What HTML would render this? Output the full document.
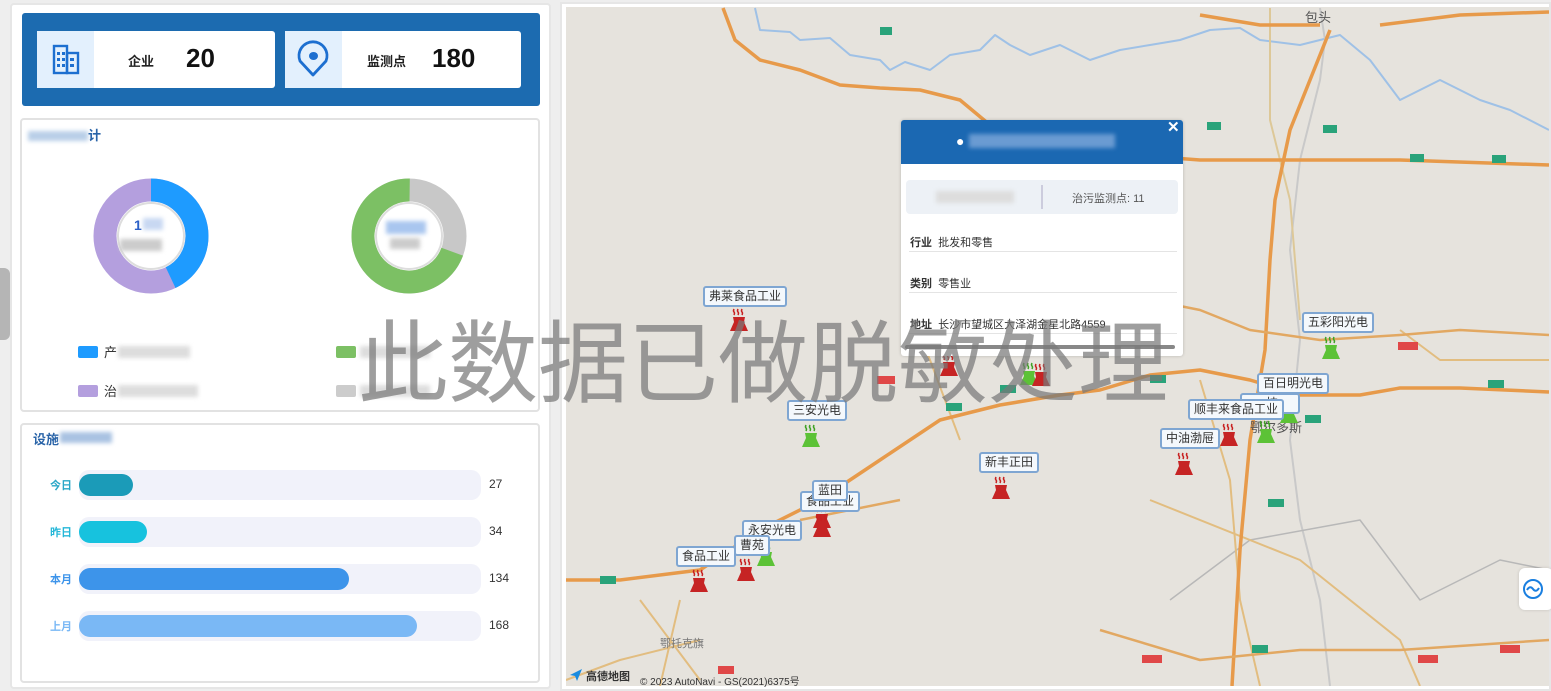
<!DOCTYPE html>
<html><head><meta charset="utf-8">
<style>
*{margin:0;padding:0;box-sizing:border-box}
body{width:1551px;height:691px;overflow:hidden;background:#eeeeee;font-family:"Liberation Sans","Noto Sans CJK SC",sans-serif;position:relative}
.abs{position:absolute}
.panel{position:absolute;background:#fff;border:2px solid #e2e2e2;border-radius:4px}
.card{position:absolute;background:#fff;border-radius:3px;top:18px;height:57px}
.ic{position:absolute;left:0;top:0;width:57px;height:57px;background:#e3f0fd}
.lbl{position:absolute;font-size:13px;font-weight:bold;color:#222;top:20px}
.num{position:absolute;font-size:26px;font-weight:bold;color:#111;top:12px}
.track{position:absolute;left:79px;width:402px;height:30px;background:#f1f2fa;border-radius:10px}
.fill{position:absolute;left:0;top:4px;height:22px;border-radius:11px}
.bl{position:absolute;left:50px;font-size:11px;font-weight:bold}
.bv{position:absolute;left:489px;font-size:12px;color:#333}
.tag{position:absolute;background:#f4f8fc;border:2px solid #7fa6d2;border-radius:3px;font-size:12px;color:#333;height:21px;line-height:17px;padding:0 4px;white-space:nowrap}
.blur{background:#ddd;filter:blur(2px)}
</style></head><body>
<svg width="0" height="0" style="position:absolute">
<defs>
<symbol id="fr" viewBox="0 0 22 24"><path d="M6 1q-1 2 0 3t0 3M10 1q-1 2 0 3t0 3M14 1q-1 2 0 3t0 3" stroke="#c82020" stroke-width="1.5" fill="none"/><path d="M5 9h12l-1 5l4 9H2l4-9z" fill="#c62424"/></symbol>
<symbol id="fg" viewBox="0 0 22 24"><path d="M6 1q-1 2 0 3t0 3M10 1q-1 2 0 3t0 3M14 1q-1 2 0 3t0 3" stroke="#3ea224" stroke-width="1.5" fill="none"/><path d="M5 9h12l-1 5l4 9H2l4-9z" fill="#5cc236"/></symbol>
</defs></svg>

<div class="panel" style="left:10px;top:3px;width:541px;height:686px;border-color:#e6e6e6"></div>
<div class="abs" style="left:22px;top:13px;width:518px;height:93px;background:#1c6bb0;border-radius:3px"></div>
<div class="card" style="left:37px;top:31px;width:238px">
 <div class="ic"><svg width="57" height="57"><g fill="none" stroke="#1d6fd0" stroke-width="2.4"><rect x="17" y="15" width="13" height="27"/><rect x="30" y="22" width="11" height="20"/></g><g fill="#1d6fd0"><rect x="20" y="21" width="3" height="3"/><rect x="25" y="21" width="3" height="3"/><rect x="20" y="27" width="3" height="3"/><rect x="25" y="27" width="3" height="3"/><rect x="20" y="33" width="3" height="3"/><rect x="25" y="33" width="3" height="3"/><rect x="33" y="27" width="4" height="3"/><rect x="33" y="33" width="4" height="3"/></g></svg></div>
 <div class="lbl" style="left:91px">企业</div><div class="num" style="left:149px">20</div>
</div>
<div class="card" style="left:285px;top:31px;width:236px">
 <div class="ic"><svg width="57" height="57"><path d="M28 44L15 30a14 14 0 1 1 26 0z" fill="none" stroke="#1d6fd0" stroke-width="2.8" stroke-linejoin="round"/><ellipse cx="28.5" cy="25" rx="4.5" ry="4" fill="#1d6fd0"/></svg></div>
 <div class="lbl" style="left:82px">监测点</div><div class="num" style="left:147px">180</div>
</div>

<div class="panel" style="left:20px;top:118px;width:520px;height:294px"></div>
<div class="abs blur" style="left:28px;top:131px;width:60px;height:10px;background:#b9cfe8"></div>
<div class="abs" style="left:88px;top:125px;font-size:13px;color:#2a64a8;font-weight:bold">计</div>
<svg class="abs" style="left:80px;top:165px" width="400" height="145">
 <g transform="translate(71,71)">
  <circle r="46" fill="none" stroke="#b49fde" stroke-width="23"/>
  <circle r="46" fill="none" stroke="#1e9bff" stroke-width="23" stroke-dasharray="124 400" transform="rotate(-90)"/>
  <circle r="33" fill="#fff" stroke="#ddd" stroke-width="2"/>
 </g>
 <g transform="translate(329,71)">
  <circle r="46" fill="none" stroke="#c8c8c8" stroke-width="23"/>
  <circle r="46" fill="none" stroke="#7cc064" stroke-width="23" stroke-dasharray="201 400" transform="rotate(20)"/>
  <circle r="33" fill="#fff" stroke="#ddd" stroke-width="2"/>
 </g>
</svg>
<div class="abs" style="left:134px;top:217px;font-size:14px;color:#2a5fc7;font-weight:bold">1</div>
<div class="abs blur" style="left:143px;top:218px;width:20px;height:12px;background:#c8d8f2"></div>
<div class="abs blur" style="left:120px;top:239px;width:42px;height:12px;background:#ccc"></div>
<div class="abs blur" style="left:386px;top:221px;width:40px;height:13px;background:#a9c6ef"></div>
<div class="abs blur" style="left:390px;top:238px;width:30px;height:11px;background:#ccc"></div>
<div class="abs" style="left:78px;top:346px;width:20px;height:12px;background:#1e9bff;border-radius:2px"></div>
<div class="abs" style="left:104px;top:342px;font-size:13px;color:#333">产</div>
<div class="abs blur" style="left:118px;top:346px;width:72px;height:12px"></div>
<div class="abs" style="left:78px;top:385px;width:20px;height:12px;background:#b49fde;border-radius:2px"></div>
<div class="abs" style="left:104px;top:381px;font-size:13px;color:#333">治</div>
<div class="abs blur" style="left:118px;top:385px;width:80px;height:12px"></div>
<div class="abs" style="left:336px;top:346px;width:20px;height:12px;background:#7cc064;border-radius:2px"></div>
<div class="abs blur" style="left:360px;top:346px;width:70px;height:12px"></div>
<div class="abs" style="left:336px;top:385px;width:20px;height:12px;background:#ccc;border-radius:2px"></div>
<div class="abs blur" style="left:360px;top:385px;width:70px;height:12px"></div>

<div class="panel" style="left:20px;top:423px;width:520px;height:260px"></div>
<div class="abs" style="left:33px;top:429px;font-size:13px;font-weight:bold;color:#2a64a8">设施</div>
<div class="abs blur" style="left:60px;top:432px;width:52px;height:11px;background:#a9c2e2"></div>
<div class="track" style="top:470px"><div class="fill" style="width:54px;background:#1b9bb8"></div></div>
<div class="bl" style="top:477px;color:#2aa7c7">今日</div><div class="bv" style="top:477px">27</div>
<div class="track" style="top:517px"><div class="fill" style="width:68px;background:#17c2de"></div></div>
<div class="bl" style="top:524px;color:#25b7d8">昨日</div><div class="bv" style="top:524px">34</div>
<div class="track" style="top:564px"><div class="fill" style="width:270px;background:#3d94ea"></div></div>
<div class="bl" style="top:571px;color:#3d94ea">本月</div><div class="bv" style="top:571px">134</div>
<div class="track" style="top:611px"><div class="fill" style="width:338px;background:#7ab8f5"></div></div>
<div class="bl" style="top:618px;color:#7ab8f5">上月</div><div class="bv" style="top:618px">168</div>

<div class="abs" style="left:0;top:268px;width:10px;height:72px;background:#b5b5b5;border-radius:0 6px 6px 0"></div>

<div class="abs" style="left:560px;top:2px;width:991px;height:689px;background:#fff;border:2px solid #e6e6e6"></div>
<svg class="abs" style="left:566px;top:7px" width="983" height="679" viewBox="566 7 983 679">
 <rect x="566" y="7" width="983" height="679" fill="#e6e3dd"/>
 <g fill="none" stroke-linejoin="round">
  <path d="M755 8L760 30L790 32L800 40L830 38L850 55L880 60L890 70L905 62L930 70L950 55L980 50L995 35L1010 45L1030 55L1060 45L1090 60L1120 50L1150 45L1180 40L1210 30L1240 28L1260 40L1300 45L1340 35L1370 60L1400 100L1440 80L1480 100L1510 110L1549 130" stroke="#9fc1e6" stroke-width="2"/>
  <path d="M1320 8L1325 40L1320 80L1300 160L1290 250L1300 340L1290 440L1300 520L1320 600L1330 686" stroke="#c9c9c9" stroke-width="2"/>
  <path d="M1170 600L1250 540L1360 520L1420 600L1500 560L1549 570" stroke="#b8b8b8" stroke-width="1.5"/>
  <path d="M1270 8L1270 120L1290 200L1300 320" stroke="#ddc898" stroke-width="2"/>
  <path d="M905 300L930 360L960 440M640 600L700 680M680 600L660 686M1200 380L1230 480L1240 600L1260 686M1400 330L1440 360L1549 360M1150 500L1300 560L1400 640L1420 686M566 680L620 660L700 640" stroke="#e2bd80" stroke-width="2"/>
  <path d="M723 8L735 40L760 60L800 70L840 85L880 88L920 90L960 100L990 125L1010 135L1050 140L1100 150L1160 157L1200 160L1300 160L1400 160L1549 165" stroke="#e79a4a" stroke-width="3.5"/>
  <path d="M1330 30L1310 80L1290 130L1275 200L1270 260L1265 350L1250 440L1240 550L1232 686" stroke="#e79a4a" stroke-width="3.5"/>
  <path d="M1380 25L1460 15L1549 12M1200 15L1260 25L1320 25" stroke="#e79a4a" stroke-width="3.5"/>
  <path d="M566 580L620 580L700 570L760 530L820 500L880 460L940 420L1000 405L1060 395L1100 390L1150 375L1200 370L1250 380L1300 395L1360 395L1400 388L1460 388L1549 392" stroke="#e79a4a" stroke-width="3.5"/>
  <path d="M1150 300L1200 310L1250 330L1320 340L1400 335L1460 330L1549 335" stroke="#e2a862" stroke-width="2.5"/>
  <path d="M1100 630L1200 660L1300 650L1400 650L1549 640M800 520L900 500" stroke="#e2a862" stroke-width="2.5"/>
 </g>
 <g font-size="11" fill="#777">
  <text x="1305" y="22" font-size="13" fill="#555">包头</text>
  <text x="1250" y="432" font-size="13" fill="#555">鄂尔多斯</text>
  <text x="660" y="647">鄂托克旗</text>
 </g>
 <g>
  <rect x="880" y="27" width="12" height="8" fill="#2aa37a"/><rect x="1207" y="122" width="14" height="8" fill="#2aa37a"/><rect x="1323" y="125" width="14" height="8" fill="#2aa37a"/><rect x="1410" y="154" width="14" height="8" fill="#2aa37a"/><rect x="1492" y="155" width="14" height="8" fill="#2aa37a"/>
  <rect x="1000" y="385" width="16" height="8" fill="#2aa37a"/><rect x="1150" y="375" width="16" height="8" fill="#2aa37a"/><rect x="946" y="403" width="16" height="8" fill="#2aa37a"/><rect x="1488" y="380" width="16" height="8" fill="#2aa37a"/><rect x="1305" y="415" width="16" height="8" fill="#2aa37a"/><rect x="1268" y="499" width="16" height="8" fill="#2aa37a"/><rect x="1252" y="645" width="16" height="8" fill="#2aa37a"/><rect x="600" y="576" width="16" height="8" fill="#2aa37a"/>
  <rect x="877" y="376" width="18" height="8" fill="#e04848"/><rect x="1398" y="342" width="20" height="8" fill="#e04848"/><rect x="1418" y="655" width="20" height="8" fill="#e04848"/><rect x="1142" y="655" width="20" height="8" fill="#e04848"/><rect x="1500" y="645" width="20" height="8" fill="#e04848"/><rect x="718" y="666" width="16" height="8" fill="#e04848"/>
 </g>
</svg>

<svg class="abs" style="left:728px;top:308px" width="22" height="24"><use href="#fr"/></svg>
<svg class="abs" style="left:800px;top:424px" width="22" height="24"><use href="#fg"/></svg>
<svg class="abs" style="left:811px;top:505px" width="22" height="24"><use href="#fr"/></svg>
<svg class="abs" style="left:811px;top:514px" width="22" height="24"><use href="#fr"/></svg>
<svg class="abs" style="left:755px;top:543px" width="22" height="24"><use href="#fg"/></svg>
<svg class="abs" style="left:735px;top:558px" width="22" height="24"><use href="#fr"/></svg>
<svg class="abs" style="left:688px;top:569px" width="22" height="24"><use href="#fr"/></svg>
<svg class="abs" style="left:938px;top:353px" width="22" height="24"><use href="#fr"/></svg>
<svg class="abs" style="left:1018px;top:362px" width="22" height="24"><use href="#fg"/></svg>
<svg class="abs" style="left:1030px;top:363px" width="22" height="24"><use href="#fr"/></svg>
<svg class="abs" style="left:990px;top:476px" width="22" height="24"><use href="#fr"/></svg>
<svg class="abs" style="left:1173px;top:452px" width="22" height="24"><use href="#fr"/></svg>
<svg class="abs" style="left:1218px;top:423px" width="22" height="24"><use href="#fr"/></svg>
<svg class="abs" style="left:1255px;top:420px" width="22" height="24"><use href="#fg"/></svg>
<svg class="abs" style="left:1278px;top:400px" width="22" height="24"><use href="#fg"/></svg>
<svg class="abs" style="left:1320px;top:336px" width="22" height="24"><use href="#fg"/></svg>

<div class="tag" style="left:703px;top:286px">弗莱食品工业</div>
<div class="tag" style="left:787px;top:400px">三安光电</div>
<div class="tag" style="left:800px;top:491px">食品工业</div>
<div class="tag" style="left:812px;top:480px">蓝田</div>
<div class="tag" style="left:742px;top:520px">永安光电</div>
<div class="tag" style="left:734px;top:535px">曹苑</div>
<div class="tag" style="left:676px;top:546px">食品工业</div>
<div class="tag" style="left:979px;top:452px">新丰正田</div>
<div class="tag" style="left:1160px;top:428px">中油渤屉</div>
<div class="tag" style="left:1240px;top:393px;width:60px">&nbsp;&nbsp;&nbsp;&nbsp;&nbsp;&nbsp;技</div>
<div class="tag" style="left:1188px;top:399px">顺丰来食品工业</div>
<div class="tag" style="left:1257px;top:373px">百日明光电</div>
<div class="tag" style="left:1302px;top:312px">五彩阳光电</div>

<div class="abs" style="left:901px;top:120px;width:282px;height:236px;background:#fff;border-radius:3px;box-shadow:0 0 3px rgba(0,0,0,.2)"></div>
<div class="abs" style="left:901px;top:120px;width:282px;height:44px;background:#1b68b2;border-radius:3px 3px 0 0"></div>
<div class="abs" style="left:956px;top:133px;color:#fff;font-size:14px">●</div>
<div class="abs blur" style="left:969px;top:134px;width:146px;height:14px;background:#6a9bd2"></div>
<div class="abs" style="left:1167px;top:118px;color:#fff;font-size:15px;font-weight:bold">✕</div>
<div class="abs" style="left:906px;top:180px;width:272px;height:34px;background:#edf1f6;border-radius:4px"></div>
<div class="abs" style="left:1041px;top:185px;width:2px;height:24px;background:#ccd"></div>
<div class="abs blur" style="left:936px;top:191px;width:78px;height:12px"></div>
<div class="abs" style="left:1072px;top:190px;font-size:11px;color:#555">治污监测点: 11</div>
<div class="abs" style="left:910px;top:234px;font-size:11px;color:#333"><b>行业</b>&nbsp;&nbsp;批发和零售</div>
<div class="abs" style="left:909px;top:251px;width:268px;height:1px;background:#e4e4e4"></div>
<div class="abs" style="left:910px;top:275px;font-size:11px;color:#333"><b>类别</b>&nbsp;&nbsp;零售业</div>
<div class="abs" style="left:909px;top:292px;width:268px;height:1px;background:#e4e4e4"></div>
<div class="abs" style="left:910px;top:316px;font-size:11px;color:#333"><b>地址</b>&nbsp;&nbsp;长沙市望城区大泽湖金星北路4559</div>
<div class="abs" style="left:909px;top:333px;width:268px;height:1px;background:#e4e4e4"></div>
<div class="abs" style="left:905px;top:345px;width:270px;height:4px;background:#888;border-radius:2px"></div>

<div class="abs" style="left:358px;top:296px;font-size:90px;line-height:120px;color:rgba(120,120,120,.72);font-family:'Noto Sans CJK SC',sans-serif;white-space:nowrap">此数据已做脱敏处理</div>

<svg class="abs" style="left:569px;top:668px" width="14" height="14"><path d="M13 1L1 7l5 1l2 5z" fill="#1a8ce0"/></svg>
<div class="abs" style="left:586px;top:668px;font-size:11px;font-weight:bold;color:#333">高德地图</div>
<div class="abs" style="left:640px;top:673px;font-size:10px;color:#333">© 2023 AutoNavi - GS(2021)6375号</div>

<div class="abs" style="left:1519px;top:568px;width:34px;height:42px;background:#fff;border-radius:6px;box-shadow:0 0 3px rgba(0,0,0,.15)"></div>
<svg class="abs" style="left:1522px;top:578px" width="22" height="22"><circle cx="11" cy="11" r="9" fill="none" stroke="#1a7fe0" stroke-width="2"/><path d="M5 12q3-5 6-1t6-1" fill="none" stroke="#1a7fe0" stroke-width="2"/></svg>
</body></html>
